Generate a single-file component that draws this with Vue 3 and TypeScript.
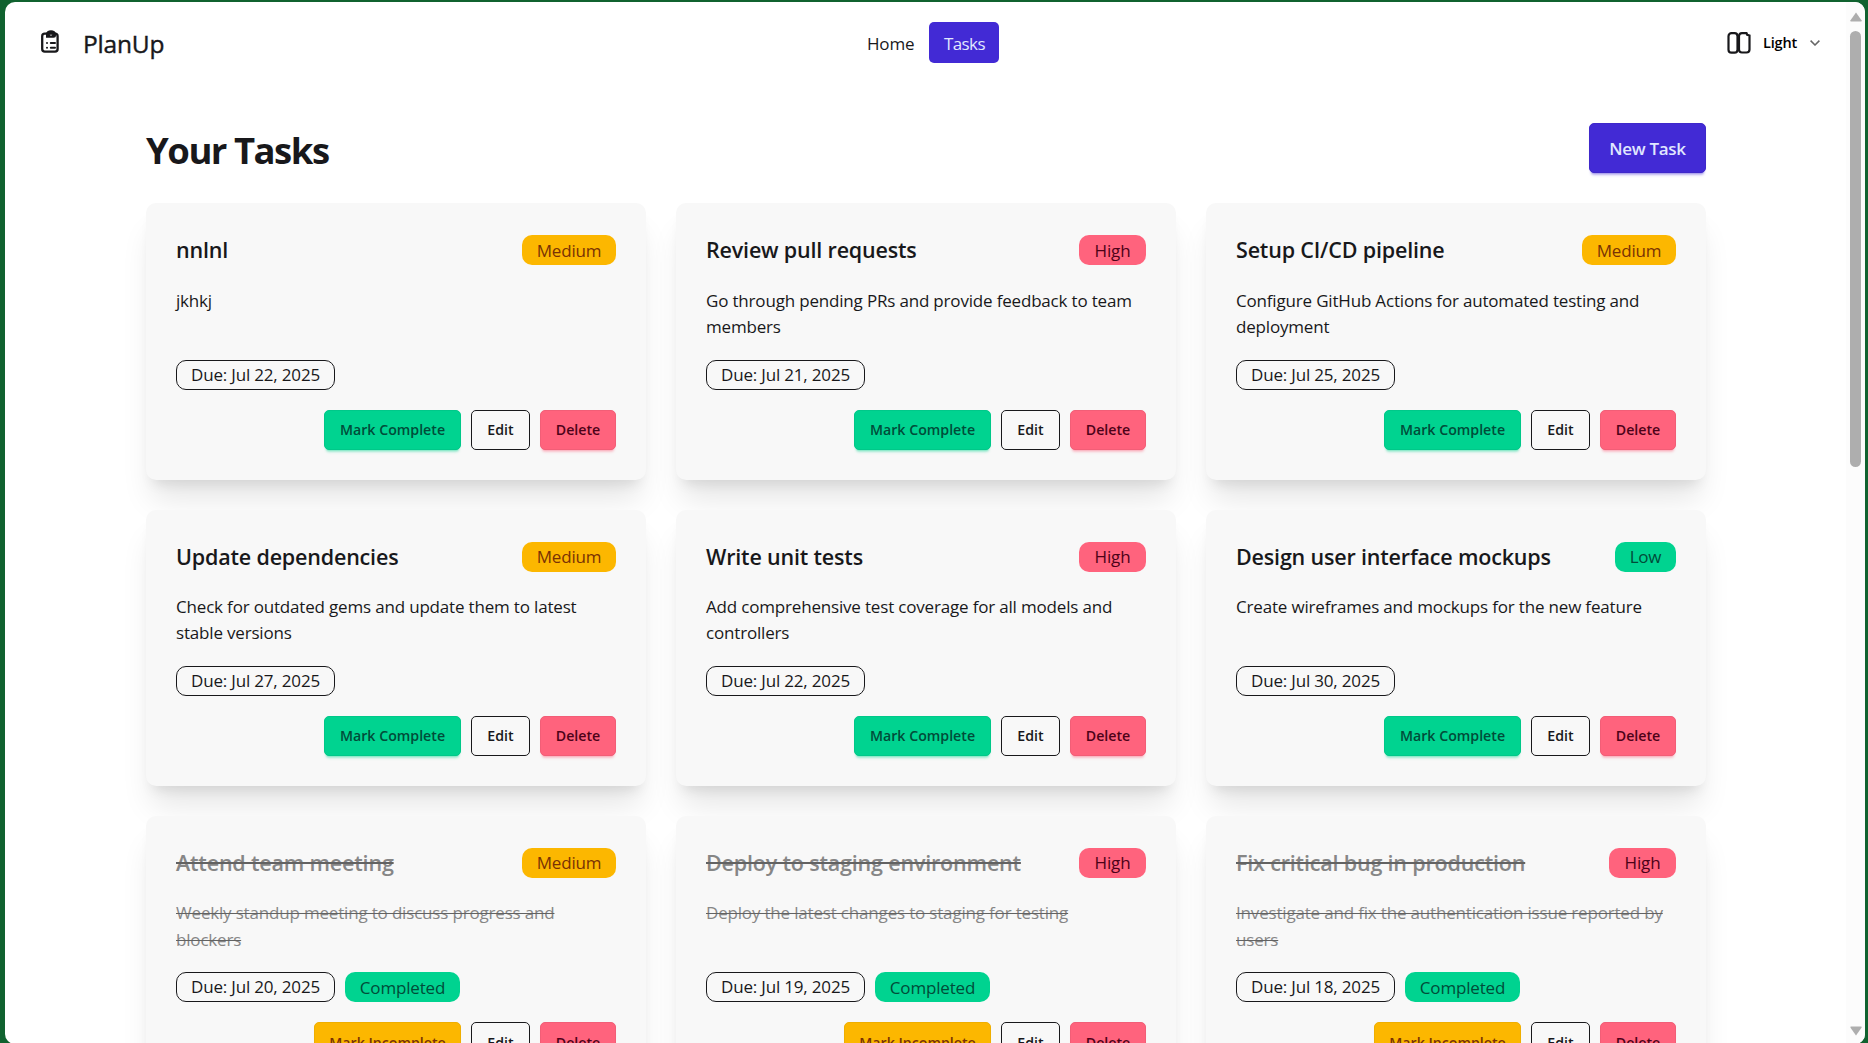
<script setup lang="ts">
type Priority = 'Low' | 'Medium' | 'High'

interface Task {
  title: string
  description: string
  priority: Priority
  due: string
  done?: boolean
}

const tasks: Task[] = [
  { title: 'nnlnl', description: 'jkhkj', priority: 'Medium', due: 'Jul 22, 2025' },
  { title: 'Review pull requests', description: 'Go through pending PRs and provide feedback to team members', priority: 'High', due: 'Jul 21, 2025' },
  { title: 'Setup CI/CD pipeline', description: 'Configure GitHub Actions for automated testing and deployment', priority: 'Medium', due: 'Jul 25, 2025' },
  { title: 'Update dependencies', description: 'Check for outdated gems and update them to latest stable versions', priority: 'Medium', due: 'Jul 27, 2025' },
  { title: 'Write unit tests', description: 'Add comprehensive test coverage for all models and controllers', priority: 'High', due: 'Jul 22, 2025' },
  { title: 'Design user interface mockups', description: 'Create wireframes and mockups for the new feature', priority: 'Low', due: 'Jul 30, 2025' },
  { title: 'Attend team meeting', description: 'Weekly standup meeting to discuss progress and blockers', priority: 'Medium', due: 'Jul 20, 2025', done: true },
  { title: 'Deploy to staging environment', description: 'Deploy the latest changes to staging for testing', priority: 'High', due: 'Jul 19, 2025', done: true },
  { title: 'Fix critical bug in production', description: 'Investigate and fix the authentication issue reported by users', priority: 'High', due: 'Jul 18, 2025', done: true },
]
</script>

<template>
  <div class="frame">
    <div class="window">
      <div class="page">
        <header class="navbar">
          <div class="brand">
            <svg class="brand-icon" viewBox="0 0 20 24" fill="none" stroke="currentColor" stroke-linecap="round">
              <rect x="2.200" y="3.700" width="15.400" height="17.900" rx="2.600" stroke-width="2.300" />
              <path d="M6 7.700V4.200a5 4 0 0 1 10 0V5.200a2.500 2.500 0 0 1-2.500 2.500zM11 3a1.300 1.300 0 1 0 .01 0z" fill="currentColor" fill-rule="evenodd" stroke="none" />
              <path d="M10.800 12.900h4.200M10.800 17.700h4.200M7 12.900h.01M7 17.700h.01" stroke-width="2" />
            </svg>
            <span class="brand-name">PlanUp</span>
          </div>
          <nav class="menu">
            <a class="menu-item home">Home</a>
            <a class="menu-item active">Tasks</a>
          </nav>
          <div class="theme">
            <svg class="theme-icon" viewBox="0 0 24 22" fill="none" stroke="currentColor" stroke-width="2.200">
              <rect x="1.500" y="1.200" width="9" height="19.500" rx="3" />
              <path d="M15 1.200H19.500L20.200 2.800 22.500 3.500V17.500a3 3 0 0 1-3 3H15a3 3 0 0 1-3-3V4a3 3 0 0 1 3-2.800z" />
            </svg>
            <span class="theme-name">Light</span>
            <svg class="chevron" viewBox="0 0 10 6" fill="none" stroke="currentColor" stroke-width="1.500"><path d="M.6.600 5 5 9.400.600" /></svg>
          </div>
        </header>

        <main class="content">
          <div class="heading">
            <h1>Your Tasks</h1>
            <button class="btn primary">New Task</button>
          </div>
          <section class="grid">
            <article v-for="task in tasks" :key="task.title" class="card" :class="{ done: task.done }">
              <div class="card-head">
                <h2><span class="strike">{{ task.title }}</span></h2>
                <span class="badge" :class="task.priority.toLowerCase()">{{ task.priority }}</span>
              </div>
              <p><span class="strike">{{ task.description }}</span></p>
              <div class="meta">
                <span class="badge outline">Due: {{ task.due }}</span>
                <span v-if="task.done" class="badge completed">Completed</span>
              </div>
              <div class="actions">
                <button v-if="task.done" class="btn sm warning">Mark Incomplete</button>
                <button v-else class="btn sm success">Mark Complete</button>
                <button class="btn sm edit">Edit</button>
                <button class="btn sm error">Delete</button>
              </div>
            </article>
          </section>
        </main>
      </div>
      <div class="scrollbar">
        <svg class="arrow" viewBox="0 0 12 10"><path d="M6 0.500 11.500 8.300Q12 9.500 11 9.500H1Q0 9.500.5 8.300Z" fill="#aeaeae" stroke="none" /></svg>
        <div class="track"><div class="thumb"></div></div>
        <svg class="arrow" viewBox="0 0 12 10"><path d="M6 9.500 11.500 1.700Q12 .5 11 .5H1Q0 .5.5 1.700Z" fill="#aeaeae" stroke="none" /></svg>
      </div>
    </div>
  </div>
</template>

<style>
html,
body {
  margin: 0;
  overflow: hidden;
}
</style>

<style scoped>
.frame {
  box-sizing: border-box;
  width: 1868px;
  height: 1043px;
  padding: 2px 3px 0 5px;
  background: #10622f;
  color: #18181b;
  font-family: "Open Sans", "Noto Sans", sans-serif;
  font-size: 17px;
  letter-spacing: -0.18px;
  line-height: 26.250px;
  overflow: hidden;
}
.window {
  display: flex;
  height: 1042px;
  border-radius: 10px;
  background: #fff;
  overflow: hidden;
}
.page {
  flex: 1;
  min-width: 0;
}
.navbar {
  box-sizing: border-box;
  display: grid;
  grid-template-columns: 1fr auto 1fr;
  align-items: center;
  height: 81px;
  padding: 0 26px 0 35px;
}
.brand {
  display: flex;
  align-items: center;
  gap: 23px;
}
.brand-icon {
  width: 20px;
  height: 24px;
  margin-bottom: 2px;
}
.brand-name {
  padding-top: 3px;
  font-size: 24.500px;
  font-weight: 500;
  letter-spacing: -0.2px;
  -webkit-text-stroke: 0.4px currentColor;
}
.menu {
  display: flex;
  margin-right: 9px;
}
.menu-item {
  box-sizing: border-box;
  height: 41px;
  padding: 8.500px 15px 0;
  border-radius: 5px;
}
.home {
  width: 77px;
}
.active {
  width: 70px;
  background: #422ad5;
  color: #e0e7ff;
  letter-spacing: -0.6px;
}
.theme {
  display: flex;
  align-items: center;
  justify-content: flex-end;
}
.theme-icon {
  width: 24px;
  height: 22px;
}
.theme-name {
  margin: 0 13px 0 12px;
  padding-top: 1px;
  font-size: 14.500px;
  font-weight: 600;
  color: #000;
}
.chevron {
  width: 10px;
  height: 6px;
  color: #666;
}
.content {
  width: 1560px;
  margin-left: 141px;
}
.heading {
  display: flex;
  justify-content: space-between;
  align-items: center;
  padding-top: 40.400px;
  margin-bottom: 30px;
  height: 50px;
}
h1 {
  margin: 0;
  padding-top: 5px;
  font-size: 36.500px;
  font-weight: 700;
  letter-spacing: -1.500px;
  line-height: 45px;
}
.grid {
  display: grid;
  grid-template-columns: repeat(3, 1fr);
  gap: 30px;
}
.card {
  display: flex;
  flex-direction: column;
  box-sizing: border-box;
  height: 276.250px;
  padding: 30px;
  border-radius: 10px;
  background: #f8f8f8;
  box-shadow: 0 25px 31.250px -6.250px rgb(0 0 0 / 0.1), 0 10px 12.500px -7.500px rgb(0 0 0 / 0.1);
}
.card-head {
  display: flex;
  justify-content: space-between;
  align-items: center;
  height: 33.750px;
}
h2 {
  margin: 0;
  font-size: 21.500px;
  font-weight: 600;
  letter-spacing: -0.18px;
  line-height: 33.750px;
  white-space: nowrap;
}
p {
  box-sizing: border-box;
  margin: 20px 0;
  padding-top: 0.800px;
  height: 52.500px;
}
.done .strike {
  color: #868686;
  text-decoration: line-through #626262 1px;
}
.done h2 .strike {
  text-decoration-thickness: 2px;
}
.badge {
  box-sizing: border-box;
  display: flex;
  align-items: center;
  justify-content: center;
  height: 30px;
  padding-top: 1px;
  border-radius: 10px;
  white-space: nowrap;
}
.medium {
  width: 94px;
  background: #fcb700;
  color: #793205;
}
.high {
  width: 67px;
  background: #ff637d;
  color: #4d0218;
}
.low {
  width: 61px;
  background: #00d390;
  color: #004c39;
}
.completed {
  width: 115px;
  background: #00d390;
  color: #004c39;
}
.outline {
  width: 159px;
  padding-top: 0;
  border: 1px solid #18181b;
}
.meta,
.actions {
  display: flex;
  gap: 10px;
}
.actions {
  justify-content: flex-end;
  margin-top: 20px;
}
.btn {
  box-sizing: border-box;
  padding: 0;
  border: 1px solid;
  border-radius: 5px;
  font-family: inherit;
  font-weight: 600;
  white-space: nowrap;
}
.primary {
  width: 117px;
  height: 50px;
  border-color: #3f28ca;
  background: #422ad5;
  color: #e0e7ff;
  font-size: 17px;
  letter-spacing: -0.3px;
  box-shadow: 0 4px 3px -2px rgb(66 42 213 / 0.3), 0 3px 2px -2px rgb(66 42 213 / 0.3);
}
.sm {
  height: 40px;
  font-size: 14.200px;
}
.success {
  width: 137px;
  border-color: #00c889;
  background: #00d390;
  color: #004c39;
  box-shadow: 0 4px 3px -2px rgb(0 211 144 / 0.3), 0 3px 2px -2px rgb(0 211 144 / 0.3);
}
.warning {
  width: 147px;
  border-color: #efae00;
  background: #fcb700;
  color: #793205;
  box-shadow: 0 4px 3px -2px rgb(252 183 0 / 0.3), 0 3px 2px -2px rgb(252 183 0 / 0.3);
}
.edit {
  width: 59px;
  border-color: #18181b;
  background: transparent;
  color: #18181b;
}
.error {
  width: 76px;
  border-color: #f25e77;
  background: #ff637d;
  color: #4d0218;
  box-shadow: 0 4px 3px -2px rgb(255 99 125 / 0.3), 0 3px 2px -2px rgb(255 99 125 / 0.3);
}
.scrollbar {
  box-sizing: border-box;
  display: flex;
  flex-direction: column;
  align-items: center;
  width: 19px;
  padding: 10px 0 8px;
  background: #fcfcfc;
}
.arrow {
  width: 12px;
  height: 10px;
}
.track {
  flex: 1;
  padding-top: 9px;
}
.thumb {
  width: 11px;
  height: 436px;
  border-radius: 6px;
  background: #aeaeae;
}
</style>
